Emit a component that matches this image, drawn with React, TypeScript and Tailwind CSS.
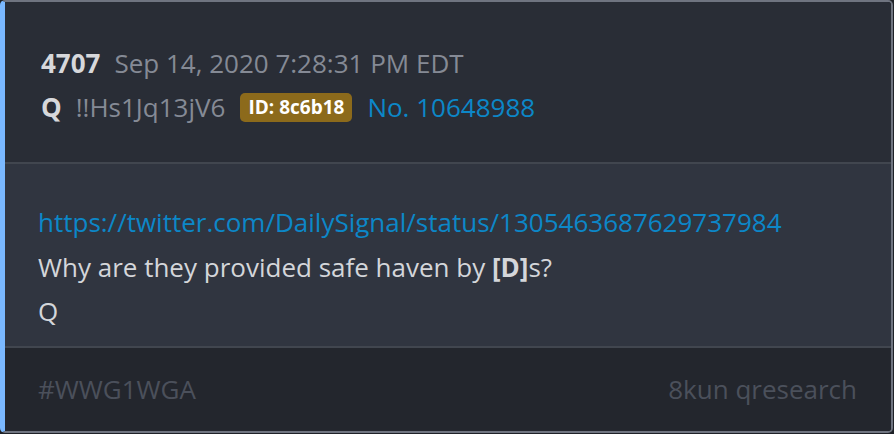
import React from "react";

export default function App() {
  return (
    <div className="w-[894px] h-[434px] bg-white" style={{ fontFamily: '"Open Sans", "Noto Sans", sans-serif' }}>
      <div className="w-[894px] h-[434px] bg-[#1e2127]">
        <div className="w-[893px] h-[433px] flex flex-col rounded-[5px] overflow-hidden border-t-2 border-r-2 border-b-2 border-[#6f7480] border-l-[5px] border-l-[#7ab8ff]">
          <div className="h-[160px] bg-[#292d36] pl-[36px] pt-[39px] text-[26px] leading-[44px]">
            <div className="flex items-center">
              <span className="font-bold text-[#d7d8db]">4707</span>
              <span className="ml-[14px] text-[#858a95]">Sep 14, 2020 7:28:31 PM EDT</span>
            </div>
            <div className="flex items-center">
              <span className="font-bold text-[#d7d8db]">Q</span>
              <span className="ml-[14px] text-[#858a95]">!!Hs1Jq13jV6</span>
              <span className="ml-[15px] bg-[#8c6a1b] text-white font-bold text-[19px] leading-[29px] px-[8px] rounded-[5px]">ID: 8c6b18</span>
              <span className="ml-[15px] text-[#0c87c8]">No. 10648988</span>
            </div>
          </div>
          <div className="h-[2px] bg-[#41464f]" />
          <div className="h-[182px] bg-[#303540] pl-[33px] pt-[36px] text-[26px] leading-[44.5px] text-[#d4d6da]">
            <div className="text-[#0c87c8]">https://twitter.com/DailySignal/status/1305463687629737984</div>
            <div>
              Why are they provided safe haven by <span className="font-bold">[D]</span>s?
            </div>
            <div>Q</div>
          </div>
          <div className="h-[2px] bg-[#41464f]" />
          <div className="flex-1 bg-[#23262d] pl-[33px] pr-[34px] flex items-center justify-between text-[26px] text-[#4b505b]">
            <span>#WWG1WGA</span>
            <span>8kun qresearch</span>
          </div>
        </div>
      </div>
    </div>
  );
}
